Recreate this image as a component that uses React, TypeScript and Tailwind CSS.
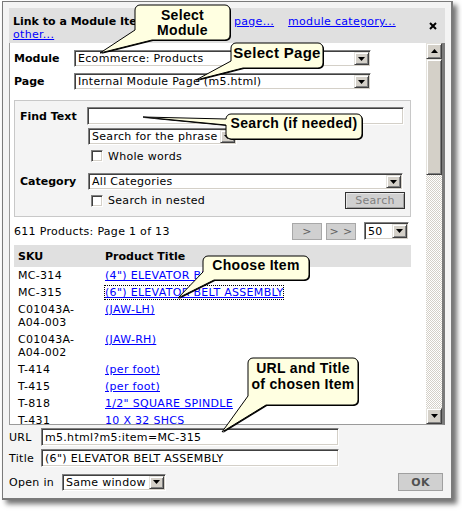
import React from "react";

// Classic 3D field and button bevels
const insetBox =
  "bg-white border border-t-[#808080] border-l-[#808080] border-r-white border-b-white shadow-[inset_1px_1px_0_#404040,inset_-1px_-1px_0_#d4d0c8]";
const raised =
  "bg-[#d4d0c8] border border-t-[#e4e2dc] border-l-[#e4e2dc] border-r-[#404040] border-b-[#404040] shadow-[inset_1px_1px_0_#ffffff,inset_-1px_-1px_0_#808080]";

function CaretDown() {
  return (
    <svg width="7" height="4" viewBox="0 0 7 4">
      <path d="M0 0H7L3.5 4Z" fill="#000" />
    </svg>
  );
}

function CaretUp() {
  return (
    <svg width="7" height="4" viewBox="0 0 7 4">
      <path d="M0 4H7L3.5 0Z" fill="#000" />
    </svg>
  );
}

function Select({ className, text }: { className: string; text: string }) {
  return (
    <div className={`flex items-stretch p-[1px] ${insetBox} ${className}`}>
      <div className="flex-1 min-w-0 pl-[2px] flex items-center whitespace-nowrap overflow-hidden">
        {text}
      </div>
      <div className={`w-[15px] shrink-0 flex items-center justify-center ${raised}`}>
        <CaretDown />
      </div>
    </div>
  );
}

function Input({ className, text }: { className: string; text?: string }) {
  return (
    <div className={`flex items-center pl-[3px] whitespace-nowrap overflow-hidden ${insetBox} ${className}`}>
      {text}
    </div>
  );
}

function Check() {
  return <div className={`w-[12px] h-[12px] shrink-0 ${insetBox}`} />;
}

type Row = { sku: string[]; title: string; focus?: boolean };

const rows: Row[] = [
  { sku: ["MC-314"], title: '(4") ELEVATOR BELT ASSEMBLY' },
  { sku: ["MC-315"], title: '(6") ELEVATOR BELT ASSEMBLY', focus: true },
  { sku: ["C01043A-", "A04-003"], title: "(JAW-LH)" },
  { sku: ["C01043A-", "A04-002"], title: "(JAW-RH)" },
  { sku: ["T-414"], title: "(per foot)" },
  { sku: ["T-415"], title: "(per foot)" },
  { sku: ["T-818"], title: '1/2" SQUARE SPINDLE' },
  { sku: ["T-431"], title: "10 X 32 SHCS" },
];

type Callout = {
  d: string;
  size: number;
  lines: { x: number; y: number; t: string }[];
};

const callouts: Callout[] = [
  {
    d: "M152 40 L100 53 L135 30 L135 10 A5 5 0 0 1 140 5 L225 5 A5 5 0 0 1 230 10 L230 35 A5 5 0 0 1 225 40 Z",
    size: 14,
    lines: [
      { x: 182.5, y: 20, t: "Select" },
      { x: 182.5, y: 35, t: "Module" },
    ],
  },
  {
    d: "M243 68 L196 80 L231 61 L231 48 A5 5 0 0 1 236 43 L318 43 A5 5 0 0 1 323 48 L323 63 A5 5 0 0 1 318 68 Z",
    size: 15,
    lines: [{ x: 277, y: 58, t: "Select Page" }],
  },
  {
    d: "M226 125 L143 117 L226 119 A5 5 0 0 1 231 114 L357 114 A5 5 0 0 1 362 119 L362 134 A5 5 0 0 1 357 139 L231 139 A5 5 0 0 1 226 134 Z",
    size: 14,
    lines: [{ x: 294, y: 128, t: "Search (if needed)" }],
  },
  {
    d: "M214 280 L178 298 L203 272 L203 261 A5 5 0 0 1 208 256 L304 256 A5 5 0 0 1 309 261 L309 275 A5 5 0 0 1 304 280 Z",
    size: 14,
    lines: [{ x: 256, y: 270, t: "Choose Item" }],
  },
  {
    d: "M266 405 L222 432 L248 396 L248 363 A5 5 0 0 1 253 358 L353 358 A5 5 0 0 1 358 363 L358 400 A5 5 0 0 1 353 405 Z",
    size: 14,
    lines: [
      { x: 303, y: 373, t: "URL and Title" },
      { x: 303, y: 389, t: "of chosen Item" },
    ],
  },
];

export default function App() {
  return (
    <div className="relative w-[462px] h-[512px] bg-white overflow-hidden font-['DejaVu_Sans',sans-serif] text-[11px] leading-[13px] tracking-[0.3px] text-black">
      <div className="pl-[2px] pt-[1px]">
        <div className="w-[451px] h-[499px] border border-r-2 border-b-2 border-[#7a7a7a] bg-[#f4f4f4] shadow-[4px_4px_5px_rgba(0,0,0,0.55)] p-[6px] flex flex-col">
          {/* Header */}
          <div className="h-[35px] shrink-0 bg-[#e0e0e0] flex">
            <div className="flex-1 pl-[4px] pt-[7px]">
              <span className="inline-block w-[221px] font-bold tracking-normal">Link to a Module Item:</span>
              <a className="inline-block mr-[14px] text-[#0000ff] underline">page...</a>
              <a className="inline-block mr-[14px] text-[#0000ff] underline">module category...</a>
              <a className="inline-block mr-[14px] text-[#0000ff] underline">other...</a>
            </div>
            <div className="w-[24px] flex items-center justify-center">
              <svg width="8" height="8" viewBox="0 0 8 8">
                <path d="M1 1L7 7M7 1L1 7" stroke="#000" strokeWidth="2" />
              </svg>
            </div>
          </div>

          {/* Scrolling picker area */}
          <div className="h-[382px] shrink-0 flex border-l border-b border-[#9a9a9a] border-r-[3px] border-r-[#7a7a7a]">
            <div className="flex-1 min-w-0 overflow-hidden bg-white pl-[4px] pt-[7px]">
              <div className="w-[397px]">
                <div className="flex items-center h-[17px]">
                  <span className="w-[60px] font-bold tracking-normal">Module</span>
                  <Select className="w-[297px] h-[17px]" text="Ecommerce: Products" />
                </div>
                <div className="flex items-center h-[17px] mt-[6px]">
                  <span className="w-[60px] font-bold tracking-normal">Page</span>
                  <Select className="w-[297px] h-[17px]" text="Internal Module Page (m5.html)" />
                </div>

                {/* Search group */}
                <div className="mt-[10px] h-[117px] border border-[#c8c8c8] bg-[#f4f4f4] px-[5px] pt-[6px]">
                  <div className="flex items-center h-[18px]">
                    <span className="w-[67px] font-bold tracking-normal">Find Text</span>
                    <Input className="w-[317px] h-[18px]" />
                  </div>
                  <Select className="ml-[68px] mt-[3px] w-[149px] h-[17px]" text="Search for the phrase" />
                  <div className="ml-[71px] mt-[5px] h-[12px] flex items-center gap-[5px]">
                    <Check />
                    <span>Whole words</span>
                  </div>
                  <div className="flex items-center h-[17px] mt-[11px]">
                    <span className="w-[68px] font-bold tracking-normal">Category</span>
                    <Select className="w-[315px] h-[17px]" text="All Categories" />
                  </div>
                  <div className="flex items-center h-[17px] mt-[2px]">
                    <div className="ml-[71px] flex items-center gap-[5px]">
                      <Check />
                      <span>Search in nested</span>
                    </div>
                    <div className="ml-auto w-[60px] h-[17px] bg-[#d0d0d0] border border-[#303030] shadow-[inset_1px_1px_0_#e8e8e8,inset_-1px_-1px_0_#a0a0a0] text-[#808080] flex items-center justify-center">
                      Search
                    </div>
                  </div>
                </div>

                {/* Result count and paging */}
                <div className="mt-[5px] h-[18px] flex items-center">
                  <span className="flex-1">611 Products: Page 1 of 13</span>
                  <div className="w-[30px] h-[17px] bg-[#d0d0d0] border border-[#a8a8a8] text-[#606060] flex items-center justify-center">
                    &gt;
                  </div>
                  <div className="ml-[4px] w-[30px] h-[17px] bg-[#d0d0d0] border border-[#a8a8a8] text-[#606060] flex items-center justify-center">
                    &gt; &gt;
                  </div>
                  <Select className="ml-[8px] mr-[2px] w-[45px] h-[18px]" text="50" />
                </div>

                {/* Product table */}
                <div className="mt-[5px] h-[22px] bg-[#e0e0e0] grid grid-cols-[91px_1fr] items-center font-bold tracking-normal">
                  <span className="pl-[4px]">SKU</span>
                  <span>Product Title</span>
                </div>
                {rows.map((r, i) => (
                  <div key={i} className="grid grid-cols-[91px_1fr] py-[2px]">
                    <div className="pl-[4px]">
                      {r.sku.map((s, j) => (
                        <div key={j}>{s}</div>
                      ))}
                    </div>
                    <div>
                      <a
                        className={
                          r.focus
                            ? "text-[#0000ff] underline outline-1 outline-dotted outline-black"
                            : "text-[#0000ff] underline"
                        }
                      >
                        {r.title}
                      </a>
                    </div>
                  </div>
                ))}
              </div>
            </div>

            {/* Scrollbar */}
            <div className="w-[16px] shrink-0 flex flex-col">
              <div className={`h-[16px] shrink-0 flex items-center justify-center ${raised}`}>
                <CaretUp />
              </div>
              <div className={`h-[116px] shrink-0 ${raised}`} />
              <div className="flex-1 bg-[image:repeating-conic-gradient(#d4d0c8_0%_25%,#ffffff_0%_50%)] bg-size-[2px_2px]" />
              <div className={`h-[16px] shrink-0 flex items-center justify-center ${raised}`}>
                <CaretDown />
              </div>
            </div>
          </div>

          {/* Chosen link fields */}
          <div className="mt-[3px] h-[18px] flex items-center">
            <span className="w-[32px]">URL</span>
            <Input className="w-[298px] h-[18px]" text="m5.html?m5:item=MC-315" />
          </div>
          <div className="mt-[3px] h-[18px] flex items-center">
            <span className="w-[32px]">Title</span>
            <Input className="w-[298px] h-[18px]" text='(6") ELEVATOR BELT ASSEMBLY' />
          </div>
          <div className="mt-[6px] h-[18px] flex items-center">
            <span className="w-[53px]">Open in</span>
            <Select className="w-[104px] h-[17px]" text="Same window" />
            <div className="ml-auto mr-[2px] w-[45px] h-[18px] bg-[#d0d0d0] border border-[#a0a0a0] text-[#505050] font-bold flex items-center justify-center">
              OK
            </div>
          </div>
        </div>
      </div>

      {/* Annotation balloons */}
      <svg className="absolute left-0 top-0 pointer-events-none" width="462" height="512">
        {callouts.map((c, i) => (
          <g key={i}>
            <path d={c.d} transform="translate(1 1)" fill="#000" />
            <path d={c.d} fill="#ffffe1" stroke="#000" strokeWidth="1" />
            {c.lines.map((l, j) => (
              <text
                key={j}
                x={l.x}
                y={l.y}
                textAnchor="middle"
                fontFamily="'Liberation Sans', Arial, sans-serif"
                fontWeight="700"
                fontSize={c.size}
                fill="#000"
              >
                {l.t}
              </text>
            ))}
          </g>
        ))}
      </svg>
    </div>
  );
}
